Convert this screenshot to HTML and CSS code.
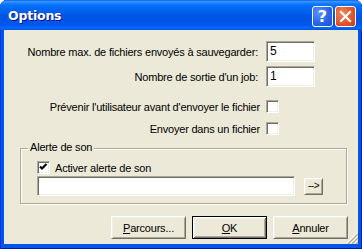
FILE: index.html
```html
<!DOCTYPE html>
<html lang="fr">
<head>
<meta charset="utf-8">
<title>Options</title>
<link rel="stylesheet" href="styles.css">
</head>
<body>
<div class="window">
  <div class="titlebar">
    <span class="title">Options</span>
    <div class="caption-btns">
      <span class="cbtn help">?</span>
      <span class="cbtn close">
        <svg width="13" height="13" viewBox="0 0 13 13"><path d="M2 2 L11 11 M11 2 L2 11" stroke="#fff" stroke-width="2.2" stroke-linecap="square"/></svg>
      </span>
    </div>
  </div>
  <div class="client">
    <div class="row r1">
      <label class="lbl">Nombre max. de fichiers envoyés à sauvegarder:</label>
      <div class="edit small">5</div>
    </div>
    <div class="row r2">
      <label class="lbl">Nombre de sortie d'un job:</label>
      <div class="edit small">1</div>
    </div>
    <div class="row r3">
      <label class="lbl cl">Prévenir l'utilisateur avant d'envoyer le fichier</label>
      <span class="check"></span>
    </div>
    <div class="row r4">
      <label class="lbl cl">Envoyer dans un fichier</label>
      <span class="check"></span>
    </div>
    <div class="group">
      <span class="legend">Alerte de son</span>
      <div class="grow">
        <span class="check">
          <svg width="9" height="9" viewBox="0 0 9 9"><path d="M1 3.5 L3 5.5 L7.5 1" fill="none" stroke="#000" stroke-width="2.2"/></svg>
        </span>
        <span class="ctext">Activer alerte de son</span>
      </div>
      <div class="grow2">
        <div class="edit wide"></div>
        <span class="btn arrow">--&gt;</span>
      </div>
    </div>
    <div class="buttons">
      <span class="btn push"><u>P</u>arcours...</span>
      <span class="btn push default"><u>O</u>K</span>
      <span class="btn push"><u>A</u>nnuler</span>
    </div>
    <svg class="grip" width="12" height="12" viewBox="0 0 12 12">
      <path d="M11 1 L1 11 M11 5 L5 11 M11 9 L9 11" stroke="#fff" stroke-width="1"/>
      <path d="M12 2 L2 12 M12 6 L6 12 M12 10 L10 12" stroke="#ACA899" stroke-width="1.2"/>
    </svg>
  </div>
</div>
</body>
</html>
```
FILE: styles.css
```css
* { box-sizing: border-box; }
html, body { margin: 0; padding: 0; background: #fff; }
body {
  font-family: "Liberation Sans", Arial, sans-serif;
  font-size: 11px;
  color: #000;
}
.window {
  width: 362px;
  height: 249px;
  display: flex;
  flex-direction: column;
  background: #0055EA;
  border-radius: 7px 7px 0 0;
  box-shadow: inset 1px 0 #0831D9, inset -1px 0 #001EA0, inset 0 -1px #001EA0;
  overflow: hidden;
}
.titlebar {
  height: 30px;
  flex: none;
  display: flex;
  align-items: center;
  justify-content: space-between;
  padding: 0 6px 0 8px;
  border-radius: 7px 7px 0 0;
  background: linear-gradient(to bottom, #0058EE 0%, #3A93FF 4%, #288EFF 8%, #127DFF 12%, #036FFC 20%, #0262EE 36%, #0057E5 50%, #0054E3 60%, #0055EB 76%, #005BF5 88%, #026AFE 92%, #0062EF 96%, #0052D6 100%);
}
.title {
  color: #fff;
  font-family: "DejaVu Sans", "Liberation Sans", sans-serif;
  font-weight: bold;
  font-size: 12.5px;
  letter-spacing: -0.2px;
  text-shadow: 1px 1px #0F1089;
  margin-top: 1px;
}
.caption-btns { display: flex; gap: 2px; margin-top: 2px; }
.cbtn {
  width: 21px;
  height: 21px;
  border: 1px solid #fff;
  border-radius: 3px;
  display: flex;
  align-items: center;
  justify-content: center;
  color: #fff;
}
.help {
  background: radial-gradient(circle at 30% 30%, #5A93FF 0%, #2A66E8 55%, #1A4FD0 100%);
  font-family: "DejaVu Sans", sans-serif;
  font-weight: bold;
  font-size: 16px;
}
.close {
  background: radial-gradient(circle at 35% 35%, #F08A62 0%, #E3562B 55%, #C8391A 100%);
}
.client {
  flex: 1;
  margin: 0 4px 5px 4px;
  background: #ECE9D8;
  position: relative;
  display: flex;
  flex-direction: column;
  padding-top: 11px;
}
.row {
  display: flex;
  align-items: center;
  padding-left: 0;
}
.lbl {
  width: 256px;
  text-align: right;
  padding-right: 2px;
  white-space: nowrap;
  letter-spacing: -0.2px;
}
.lbl.cl { padding-right: 0; width: 256px; }
.row .edit.small, .row .check { margin-left: 6px; }
.r1 .edit.small, .r2 .edit.small { margin-left: 6px; }
.r2 { margin-top: 4px; }
.r3 { margin-top: 13px; }
.r4 { margin-top: 9px; }
.edit {
  background: #fff;
  border: 1px solid;
  border-color: #ACA899 #FFFFFF #FFFFFF #ACA899;
  box-shadow: inset 1px 1px #716F64, inset -1px -1px #F1EFE2;
  height: 21px;
  padding: 2px 0 0 3px;
  font-size: 12px;
  line-height: 15px;
}
.edit.small { width: 49px; }
.edit.wide { width: 258px; height: 20px; }
.check {
  width: 13px;
  height: 13px;
  background: #fff;
  border: 1px solid;
  border-color: #ACA899 #FFFFFF #FFFFFF #ACA899;
  box-shadow: inset 1px 1px #716F64, inset -1px -1px #F1EFE2;
  display: flex;
  align-items: center;
  justify-content: center;
  flex: none;
}
.group {
  position: relative;
  margin: 13px 11px 0 16px;
  height: 56px;
  border: 1px solid #ACA899;
  box-shadow: inset 1px 1px #fff, 1px 1px #fff;
  padding: 12px 0 0 16px;
}
.legend {
  position: absolute;
  top: -8px;
  left: 7px;
  padding: 0 2px;
  background: #ECE9D8;
  letter-spacing: -0.2px;
}
.grow { display: flex; align-items: center; }
.ctext { margin-left: 5px; letter-spacing: -0.2px; }
.grow2 { display: flex; align-items: center; margin-top: 2px; }
.btn {
  background: #ECE9D8;
  border: 1px solid;
  border-color: #FFFFFF #716F64 #716F64 #FFFFFF;
  box-shadow: inset 1px 1px #F1EFE2, inset -1px -1px #ACA899;
  display: flex;
  align-items: center;
  justify-content: center;
  letter-spacing: -0.2px;
}
.arrow {
  width: 19px;
  height: 17px;
  margin-left: 9px;
  font-size: 10px;
  letter-spacing: -0.5px;
  padding-bottom: 1px;
}
.buttons {
  display: flex;
  justify-content: flex-end;
  gap: 6px;
  margin: 12px 10px 0 0;
}
.push { width: 75px; height: 23px; }
.push.default {
  border: 1px solid #000;
  box-shadow: inset 1px 1px #fff, inset -1px -1px #716F64, inset 2px 2px #F1EFE2, inset -2px -2px #ACA899;
}
u { text-decoration: underline; text-underline-offset: 1px; }
.grip { position: absolute; right: 0; bottom: 0; }
```
